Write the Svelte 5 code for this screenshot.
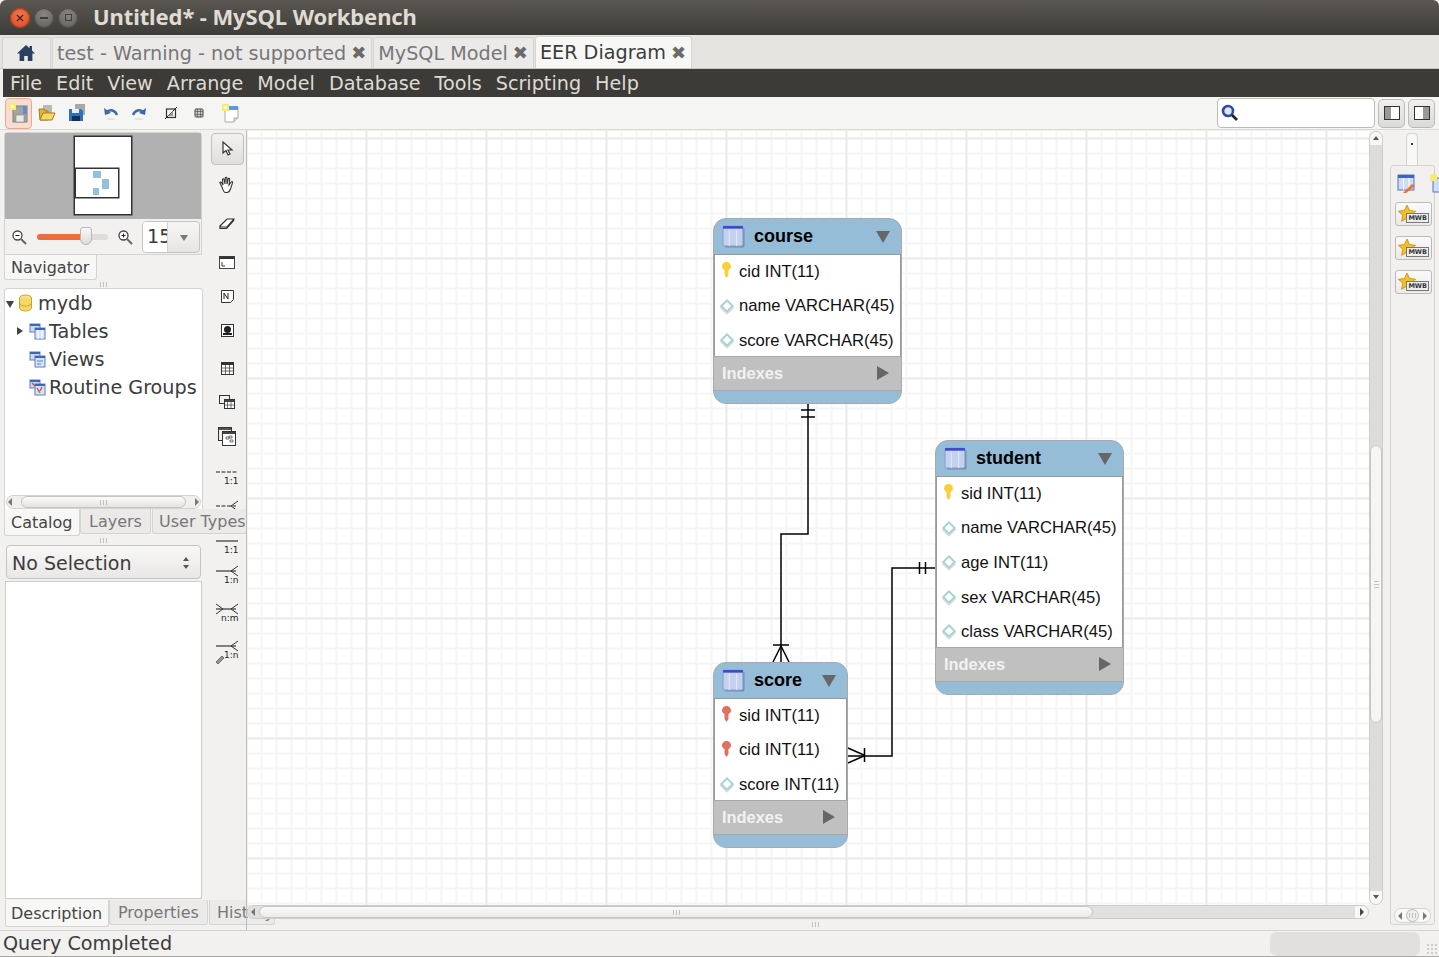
<script>
  const menu = ['File','Edit','View','Arrange','Model','Database','Tools','Scripting','Help'];
  const tables = [
    { name:'course', x:466, y:87, w:189, cols:[['pk','cid INT(11)'],['col','name VARCHAR(45)'],['col','score VARCHAR(45)']] },
    { name:'student', x:688, y:309, w:189, cols:[['pk','sid INT(11)'],['col','name VARCHAR(45)'],['col','age INT(11)'],['col','sex VARCHAR(45)'],['col','class VARCHAR(45)']] },
    { name:'score', x:466, y:531, w:135, cols:[['fk','sid INT(11)'],['fk','cid INT(11)'],['col','score INT(11)']] }
  ];
  const tools = [
    {k:'arrow',h:36},{k:'hand',h:36},{k:'eraser',h:42},{k:'layer',h:34},{k:'note',h:34},{k:'image',h:34},
    {k:'table',h:42},{k:'view',h:26},{k:'routine',h:42},
    {k:'rel',h:42,t:'1:1',dash:true,crow:false},{k:'rel',h:26,t:'1:n',dash:true,crow:true},
    {k:'rel',h:44,t:'1:1',dash:false,crow:false},{k:'rel',h:16,t:'1:n',dash:false,crow:true},
    {k:'rel',h:60,t:'n:m',dash:false,crow:true,both:true},{k:'rel',h:14,t:'1:n',dash:false,crow:true,pen:true}
  ];
</script>

{#snippet grip()}<span class="grip"></span>{/snippet}

{#snippet tableIcon(s)}
  <svg width={s} height={s} viewBox="0 0 22 22">
    <rect x="2.500" y="2.500" width="19" height="19" rx="1.500" fill="#4a5f8a" opacity=".5"/>
    <rect x="1" y="1" width="19" height="19" rx="1.500" fill="#c3d1ee" stroke="#8ba0d0"/>
    <rect x="1" y="1" width="19" height="2.500" fill="#3a48cc"/>
    <path d="M7 4v16M14 4v16" stroke="#dde5f6" stroke-width="1.200"/>
  </svg>
{/snippet}

{#snippet stack(c)}
  <svg width="17" height="17" viewBox="0 0 17 17">
    <rect x="1" y="1" width="10" height="8" fill="#c9d9f2" stroke="#5f7fb8"/>
    <rect x="1" y="1" width="10" height="2" fill="#3f63b5"/>
    <rect x="6" y="5" width="10" height="11" fill="#d7e4f6" stroke="#5f7fb8"/>
    <rect x="6" y="5" width="10" height="2" fill="#3f63b5"/>
    {#if c === 't'}<path d="M9 7v9M13 7v9" stroke="#fff"/>{/if}
    {#if c === 'v'}<path d="M8 10h6M8 13h4" stroke="#5f7fb8"/>{/if}
    {#if c === 'r'}<path d="M3 4l3 3M8 9l3 5M13 8l-2 4" stroke="#c05a50" stroke-width="1.400"/>{/if}
  </svg>
{/snippet}

{#snippet star()}
  <button class="starbtn">
    <svg width="36" height="22" viewBox="0 0 36 22">
      <path d="M11 2l2.600 5.600 6 .7-4.500 4 1.300 6L11 15.200 5.600 18.300l1.300-6-4.500-4 6-.7z" fill="#f5c024" stroke="#c08a10" stroke-width=".8"/>
    </svg>
    <span class="mwb">MWB</span>
  </button>
{/snippet}

<div class="app">
  <header class="title">
    <span class="wb close"><svg width="8" height="8" viewBox="0 0 8 8"><path d="M1 1l6 6M7 1L1 7" stroke="#4d2016" stroke-width="1.300"/></svg></span>
    <span class="wb"><i class="dash"></i></span>
    <span class="wb"><i class="sq"></i></span>
    <span class="title-text">Untitled* - MySQL Workbench</span>
  </header>

  <nav class="tabs">
    <div class="tab home">
      <svg width="20" height="18" viewBox="0 0 20 18"><path d="M10 1L1 9.500h2.600V17h4.600v-5h3.600v5h4.600V9.500H19l-3-2.900V2h-2.400v2.300z" fill="#2b3f5e"/></svg>
    </div>
    <div class="tab">test - Warning - not supported <b class="x">✖</b></div>
    <div class="tab">MySQL Model <b class="x">✖</b></div>
    <div class="tab active">EER Diagram <b class="x">✖</b></div>
  </nav>

  <div class="menu">
    {#each menu as m}<span>{m}</span>{/each}
  </div>

  <div class="toolbar">
    <span class="tb selected">
      <svg width="22" height="22" viewBox="0 0 22 22"><rect x="5" y="4" width="14" height="16" fill="#a3a3a0" stroke="#808080"/><rect x="8" y="13" width="8" height="7" fill="#eaeae8" stroke="#888" stroke-width=".6"/><rect x="15" y="4" width="4" height="8" fill="#5b8fd0"/><rect x="1" y="1" width="7" height="7" fill="#f8ec70"/><rect x="3" y="3" width="3" height="3" fill="#fffbd0"/></svg>
    </span>
    <span class="tb g1">
      <svg width="18" height="18" viewBox="0 0 18 18"><rect x="5" y="1" width="9" height="9" fill="#b8b8b4"/><path d="M1 5h5l1 2h3v9H2z" fill="#e2b53a" stroke="#a67c14"/><path d="M2 16l3-7h12l-3 7z" fill="#f5d76a" stroke="#a67c14"/></svg>
    </span>
    <span class="tb g2">
      <svg width="18" height="18" viewBox="0 0 18 18"><rect x="7" y="0" width="10" height="11" fill="#a8a8a4"/><path d="M1 5h12l2 2v10H1z" fill="#2f6fc0"/><rect x="4" y="5" width="7" height="4" fill="#e8eef7"/><rect x="4" y="12" width="8" height="5" fill="#12305e"/></svg>
    </span>
    <span class="tb g3">
      <svg width="16" height="16" viewBox="0 0 16 16"><path d="M14 10C12 5 7 4 4 7" fill="none" stroke="#3a6aa8" stroke-width="2.400"/><path d="M1 3l1 7 6-2z" fill="#3a6aa8"/><path d="M4 14h8" stroke="#ddd" stroke-width="1.400"/></svg>
    </span>
    <span class="tb g4">
      <svg width="16" height="16" viewBox="0 0 16 16"><path d="M2 10C4 5 9 4 12 7" fill="none" stroke="#3a6aa8" stroke-width="2.400"/><path d="M15 3l-1 7-6-2z" fill="#3a6aa8"/><path d="M4 14h8" stroke="#ddd" stroke-width="1.400"/></svg>
    </span>
    <span class="tb g5">
      <svg width="12" height="12" viewBox="0 0 12 12"><rect x="1.500" y="2" width="9" height="8.500" fill="none" stroke="#333" stroke-width="1.200"/><path d="M0 12L12 0" stroke="#222"/><path d="M3 9l5-5v5z" fill="#999"/></svg>
    </span>
    <span class="tb g6">
      <svg width="10" height="10" viewBox="0 0 10 10"><rect x="1" y="1" width="8" height="8" rx="1" fill="#ccc" stroke="#444"/><path d="M3.500 1v8M6.500 1v8M1 3.500h8M1 6.500h8" stroke="#555" stroke-width=".7"/></svg>
    </span>
    <span class="tb g7">
      <svg width="18" height="19" viewBox="0 0 18 19"><path d="M3 3h13v11l-4 4H3z" fill="#fff" stroke="#aaa"/><rect x="3" y="2" width="13" height="4" fill="#5b9ae0"/><path d="M12 18v-4h4" fill="#ddd" stroke="#aaa"/><rect x="0" y="0" width="7" height="7" fill="#f8ec70"/><rect x="2" y="2" width="3" height="3" fill="#fffbd0"/></svg>
    </span>
    <span class="spacer"></span>
    <div class="search">
      <svg width="18" height="18" viewBox="0 0 18 18"><circle cx="7" cy="7" r="5" fill="#dfe6f5" stroke="#2d4da0" stroke-width="2.600"/><path d="M11 11l5 5" stroke="#222" stroke-width="2.600"/></svg>
    </div>
    <span class="side-btn"><svg width="16" height="14" viewBox="0 0 16 14"><rect x=".5" y=".5" width="15" height="13" fill="#fff" stroke="#333"/><rect x="1" y="1" width="6" height="12" fill="#999"/></svg></span>
    <span class="side-btn"><svg width="16" height="14" viewBox="0 0 16 14"><rect x=".5" y=".5" width="15" height="13" fill="#fff" stroke="#333"/><rect x="9" y="1" width="6" height="12" fill="#999"/></svg></span>
  </div>

  <main class="main">
    <aside class="sidebar">
      <section class="navbox">
        <div class="preview">
          <div class="page">
            <div class="viewport">
              <i class="mini m1"></i><i class="mini m2"></i><i class="mini m3"></i>
            </div>
          </div>
        </div>
        <div class="zoomrow">
          <svg class="zicon" width="16" height="16" viewBox="0 0 16 16"><circle cx="6.500" cy="6.500" r="4.500" fill="#fff" stroke="#444" stroke-width="1.300"/><path d="M4.500 6.500h4" stroke="#222"/><path d="M10 10l5 5" stroke="#666" stroke-width="2"/></svg>
          <div class="slider"><div class="fill"></div><div class="thumb"></div></div>
          <svg class="zicon" width="16" height="16" viewBox="0 0 16 16"><circle cx="6.500" cy="6.500" r="4.500" fill="#fff" stroke="#444" stroke-width="1.300"/><path d="M4.500 6.500h4M6.500 4.500v4" stroke="#222"/><path d="M10 10l5 5" stroke="#666" stroke-width="2"/></svg>
          <div class="zcombo"><span class="zval"><span>15</span></span><span class="zarrow"></span></div>
        </div>
      </section>
      <div class="subtabs navtabs"><span class="st on nav">Navigator</span></div>
      <div class="handle h1">{@render grip()}</div>

      <section class="tree">
        <div class="tn l0"><i class="tri down"></i>
          <svg width="15" height="18" viewBox="0 0 15 18"><ellipse cx="7.500" cy="4" rx="6" ry="3" fill="#f7e38a" stroke="#c9a227"/><path d="M1.500 4v10c0 1.600 2.700 3 6 3s6-1.400 6-3V4" fill="#f3d768" stroke="#c9a227"/><path d="M1.500 9c0 1.600 2.700 3 6 3s6-1.400 6-3" fill="none" stroke="#c9a227"/></svg>
          <span>mydb</span></div>
        <div class="tn l1"><i class="tri fwd"></i>{@render stack('t')}<span>Tables</span></div>
        <div class="tn l1"><i class="tri none"></i>{@render stack('v')}<span>Views</span></div>
        <div class="tn l1"><i class="tri none"></i>{@render stack('r')}<span>Routine Groups</span></div>
        <div class="tree-sb">
          <i class="ar l"></i>
          <div class="tree-thumb">{@render grip()}</div>
          <i class="ar r"></i>
        </div>
      </section>

      <div class="subtabs lower">
        <span class="st on catalog">Catalog</span><span class="st layers">Layers</span><span class="st types">User Types</span>
      </div>
      <div class="handle h2">{@render grip()}</div>

      <div class="combo"><span>No Selection</span>
        <svg width="8" height="14" viewBox="0 0 8 14"><path d="M4 1l3 4H1zM4 13l3-4H1z" fill="#555"/></svg>
      </div>
      <div class="desc"></div>
      <div class="subtabs bottom">
        <span class="st on dsc">Description</span><span class="st props">Properties</span><span class="st hist">History</span>
      </div>
    </aside>

    <div class="toolcol">
      {#each tools as t}
        <div class="toolslot" style="height:{t.h}px">
          {#if t.k === 'arrow'}
            <span class="toolbtn"><svg width="14" height="16" viewBox="0 0 14 16"><path d="M3 1v11l3-2.500L8 14l2-1-2-4h4z" fill="#fff" stroke="#333" stroke-width="1.200"/></svg></span>
          {:else if t.k === 'hand'}
            <svg width="18" height="18" viewBox="0 0 18 18"><path d="M4 11L2 7c-.5-1 1-1.500 1.500-.5L5 9 4.500 3.500c0-1 1.500-1 1.600 0L7 8l.3-6c0-1 1.600-1 1.600 0L9 8l1.200-5c.2-1 1.600-.8 1.500.2L11 9l2.300-3c.6-.8 1.700 0 1.200.9L12.500 13c-.8 2-1.500 3.500-3.500 3.500H7.500C5.500 16.500 5 14 4 11z" fill="#fff" stroke="#333" stroke-width="1.100"/></svg>
          {:else if t.k === 'eraser'}
            <svg width="16" height="12" viewBox="0 0 16 12"><path d="M1 8l7-7h7l-7 8H2z" fill="#fff" stroke="#333" stroke-width="1.200"/><path d="M1 8v2.500h6.500L15 2" fill="none" stroke="#333" stroke-width="1.200"/></svg>
          {:else if t.k === 'layer'}
            <svg width="16" height="13" viewBox="0 0 16 13"><rect x=".5" y=".5" width="15" height="12" fill="#fff" stroke="#444"/><rect x=".5" y=".5" width="15" height="2.500" fill="#333"/><path d="M3 6v4h3" stroke="#333" fill="none"/></svg>
          {:else if t.k === 'note'}
            <svg width="13" height="13" viewBox="0 0 13 13"><path d="M.5.500h12v9l-3 3h-9z" fill="#fff" stroke="#333"/><path d="M3 9V3l4 6V3" stroke="#222" fill="none"/></svg>
          {:else if t.k === 'image'}
            <svg width="13" height="13" viewBox="0 0 13 13"><rect x=".5" y=".5" width="12" height="12" fill="#fff" stroke="#333"/><circle cx="6.500" cy="5.500" r="3.500" fill="#222"/><rect x="2" y="9" width="9" height="2" fill="#222"/></svg>
          {:else if t.k === 'table'}
            <svg width="13" height="13" viewBox="0 0 13 13"><rect x=".5" y=".5" width="12" height="12" fill="#fff" stroke="#333"/><rect x="1" y="1" width="11" height="2" fill="#333"/><path d="M4.500 3v9M8.500 3v9M1 6h11M1 9h11" stroke="#444" stroke-width=".8"/></svg>
          {:else if t.k === 'view'}
            <svg width="16" height="14" viewBox="0 0 16 14"><rect x=".5" y=".5" width="10" height="8" fill="#eee" stroke="#333"/><rect x="5.500" y="4.500" width="10" height="9" fill="#fff" stroke="#333"/><rect x="6" y="5" width="9" height="2" fill="#444"/><path d="M8.500 7v6M12 7v6M6 10h9" stroke="#555" stroke-width=".8"/></svg>
          {:else if t.k === 'routine'}
            <svg width="18" height="19" viewBox="0 0 18 19"><rect x=".5" y=".5" width="13" height="13" fill="#eee" stroke="#333"/><rect x="1" y="1" width="12" height="2" fill="#555"/><rect x="4.500" y="4.500" width="13" height="14" fill="#fff" stroke="#333"/><rect x="5" y="5" width="12" height="2" fill="#444"/><path d="M8 10h3v2H8zM12 13h3v2h-3zM11 9h3v2h-3z" fill="none" stroke="#444" stroke-width=".7"/></svg>
          {:else}
            <svg class="rel" width="32" height="24" viewBox="0 0 32 24">
              <path d={t.crow ? 'M5 6h20' : 'M5 6h22'} stroke="#222" stroke-width="1.100" stroke-dasharray={t.dash ? '4 1.500' : undefined}/>
              {#if t.crow}<path d="M27 1l-7 5 7 5" fill="none" stroke="#333"/>{/if}
              {#if t.both}<path d="M5 1l7 5-7 5" fill="none" stroke="#333"/>{/if}
              {#if t.pen}<path d="M5 22l6-6 2 2-6 6z" fill="#999" stroke="#444" stroke-width=".7"/>{/if}
              <text x="27.500" y="18" text-anchor="end">{t.t}</text>
            </svg>
          {/if}
        </div>
      {/each}
    </div>

    <div class="center">
      <div class="canvas-row">
        <div class="canvas">
          <svg class="wires" width="1122" height="774" viewBox="247 131 1122 774">
            <g fill="none" stroke="#000" stroke-width="1.500">
              <path d="M808 404V534H781V662"/>
              <path d="M801 410h14M801 417h14"/>
              <path d="M773 645h16M781 646l-8 16M781 646l8 16"/>
              <path d="M935 568H892V756H848"/>
              <path d="M919.500 562v12M925.500 562v12"/>
              <path d="M864.500 748v14M865 755.500l-17-7.500M865 755.500l-17 7.500"/>
            </g>
          </svg>
          {#each tables as t}
            <div class="tbl" style="left:{t.x}px;top:{t.y}px;width:{t.w}px">
              <div class="thead">
                {@render tableIcon(23)}
                <span class="tname">{t.name}</span>
                <i class="tdown"></i>
              </div>
              <div class="tbody">
                {#each t.cols as c}
                  <div class="trow">
                    {#if c[0] === 'col'}
                      <i class="dia"></i>
                    {:else}
                      <svg class="key" width="11" height="18" viewBox="0 0 11 18"><path d="M5.500 1a4.500 4.500 0 0 1 4.500 4.500c0 2-1.500 3-2.500 3.500v5l-2 3-2-3V9C2.500 8.500 1 7.500 1 5.500A4.500 4.500 0 0 1 5.500 1z" fill={c[0] === 'pk' ? '#f6cf3a' : '#e0705f'}/></svg>
                    {/if}
                    <span>{c[1]}</span>
                  </div>
                {/each}
              </div>
              <div class="tidx"><span>Indexes</span><i class="tfwd"></i></div>
              <div class="tfoot"></div>
            </div>
          {/each}
        </div>
        <div class="vsb">
          <i class="vend top"></i>
          <div class="vthumb"><span class="grip"></span></div>
          <i class="vend bot"></i>
        </div>
      </div>
      <div class="hsb">
        <i class="ar l"></i>
        <div class="hthumb">{@render grip()}</div>
        <div class="hend"><i class="ar r"></i></div>
      </div>
      <div class="handle h3">{@render grip()}</div>
    </div>

    <aside class="rside">
      <div class="rtab"><i></i></div>
      <div class="rpanel">
        <div class="ricons">
          <svg width="20" height="20" viewBox="0 0 20 20"><rect x="1" y="1" width="16" height="15" fill="#cfdcf3" stroke="#5577bb"/><rect x="1" y="1" width="16" height="3" fill="#3f63c5"/><path d="M6.500 4v12M12 4v12" stroke="#fff"/><path d="M6 19l9-9 3 2-9 7z" fill="#e8732a"/></svg>
          <svg class="clip" width="10" height="20" viewBox="0 0 10 20"><rect x="3" y="4" width="14" height="14" fill="#cfdcf3" stroke="#5577bb"/><rect x="0" y="0" width="7" height="7" fill="#f8ec70"/></svg>
        </div>
        {@render star()}
        {@render star()}
        {@render star()}
        <div class="rspace"></div>
        <div class="rsb"><i class="ar l"></i><span class="rthumb">{@render grip()}</span><i class="ar r"></i></div>
      </div>
    </aside>
  </main>

  <footer class="status">
    <span>Query Completed</span>
    <div class="progress"></div>
    <i class="corner"></i>
  </footer>
</div>

<style>
  :global(body) { margin: 0; background: #f2f1f0; }
  .app {
    width: 1439px; height: 957px; overflow: hidden; display: flex; flex-direction: column;
    font-family: "DejaVu Sans", sans-serif; color: #3c3c3c; background: #f2f1f0;
  }
  i { display: block; }

  .title {
    height: 35px; flex: none; display: flex; align-items: center; gap: 4px; padding-left: 10px; box-sizing: border-box;
    background: linear-gradient(#5a5751, #3d3c38); border-radius: 6px 6px 0 0;
  }
  .wb {
    width: 20px; height: 20px; border-radius: 50%; display: flex; align-items: center; justify-content: center;
    background: radial-gradient(circle at 50% 35%, #8a877f, #5c5a54); box-shadow: inset 0 0 0 1px #4a4842;
  }
  .wb.close { background: radial-gradient(circle at 50% 35%, #f07a4e, #d8421e); box-shadow: inset 0 0 0 1px #a93a1c; }
  .dash { width: 8px; height: 2px; background: #3f3d38; }
  .sq { width: 7px; height: 7px; border: 1.500px solid #3f3d38; box-sizing: border-box; }
  .title-text { margin: 0 0 3px 11px; font: 700 22px "Noto Sans", sans-serif; color: #e0dcd3; letter-spacing: -.1px; }

  .tabs {
    height: 34px; flex: none; box-sizing: border-box; display: flex; align-items: flex-end; gap: 1px; padding: 2px 0 0 2px;
    background: #e6e4e1; border-bottom: 1px solid #c9c7c4;
  }
  .tab {
    height: 31px; box-sizing: border-box; padding: 0 5px 0 4px; display: flex; align-items: center; gap: 5px; white-space: nowrap;
    font-size: 19.200px; color: #77777a; background: #ebeae8; border: 1px solid #d6d4d1; border-bottom: 0; border-radius: 3px 3px 0 0;
  }
  .tab.home { width: 49px; justify-content: center; }
  .tab.active { background: #f7f7f6; color: #3c3c3c; height: 32px; }
  .x { font-size: 18px; line-height: 1; color: #6a6a6a; font-weight: 400; }

  .menu {
    height: 28px; flex: none; margin-left: 3px; display: flex; align-items: center; gap: 14px; padding-left: 7px;
    background: #3c3b37; color: #dfdbd2; font-size: 19.200px; box-sizing: border-box;
  }

  .toolbar {
    height: 33px; flex: none; display: flex; align-items: center; position: relative; box-sizing: border-box;
    background: #f5f5f4; border-bottom: 1px solid #dcdad7; padding-left: 5px;
  }
  .tb { display: flex; align-items: center; justify-content: center; }
  .tb.selected { width: 27px; height: 31px; box-sizing: border-box; background: #f8dccf; border: 1px solid #f0a88a; border-radius: 4px; }
  .g1 { margin-left: 6px; }
  .g2 { margin-left: 12px; }
  .g3 { margin-left: 17px; }
  .g4 { margin-left: 12px; }
  .g5 { margin-left: 18px; }
  .g6 { margin-left: 17px; }
  .g7 { margin-left: 18px; }
  .spacer { flex: 1; }
  .search {
    width: 158px; height: 30px; box-sizing: border-box; background: #fff; border: 1px solid #bdbbb8; border-radius: 4px;
    display: flex; align-items: center; padding-left: 3px; margin-right: 3px;
  }
  .side-btn {
    width: 27px; height: 29px; box-sizing: border-box; display: flex; align-items: center; justify-content: center;
    background: linear-gradient(#f1f0ef, #dcdbd9); border: 1px solid #bdbbb8; border-radius: 5px; margin-right: 3px;
  }
  .side-btn:last-child { margin-right: 4px; }

  .main { height: 800px; flex: none; display: flex; position: relative; }

  .sidebar { width: 205px; flex: none; position: relative; z-index: 2; padding-left: 4px; box-sizing: border-box; }
  .navbox {
    width: 198px; height: 123px; margin-top: 2px; box-sizing: border-box; border: 1px solid #d5d3d0; border-radius: 4px 4px 0 0;
  }
  .preview { height: 86px; background: #b1b1b1; display: flex; justify-content: center; box-sizing: border-box; align-items: flex-start; padding-top: 3px; position: relative; }
  .page { width: 58px; height: 79px; box-sizing: border-box; background: #fff; border: 1px solid #333; box-shadow: 0 0 0 .5px #333; }
  .viewport { width: 44px; height: 30px; border: 1px solid #333; box-shadow: 0 0 0 .5px #333; position: relative; box-sizing: border-box; margin-top: 31px; }
  .mini { position: absolute; background: #96bfdc; }
  .m1 { left: 17px; top: 2px; width: 8px; height: 7px; }
  .m2 { left: 26px; top: 10px; width: 7px; height: 10px; }
  .m3 { left: 17px; top: 19px; width: 6px; height: 7px; }
  .zoomrow { height: 36px; display: flex; align-items: center; padding-left: 6px; }
  .slider { width: 71px; height: 6px; margin: 0 9px 0 10px; background: #dedddb; border-radius: 3px; position: relative; }
  .fill { width: 48px; height: 6px; background: #ee6c3d; border-radius: 3px; }
  .thumb { position: absolute; left: 43px; top: -7px; width: 12px; height: 18px; background: linear-gradient(#f8f8f7, #dddcda); border: 1px solid #b8b6b3; border-radius: 3px 3px 6px 6px; box-sizing: border-box; }
  .zicon { flex: none; }
  .zcombo { width: 58px; height: 32px; margin-left: 9px; box-sizing: border-box; display: flex; background: linear-gradient(#f6f6f5, #e6e5e3); border: 1px solid #c6c4c1; border-radius: 4px; }
  .zval { width: 25px; background: #fff; overflow: hidden; font-size: 19.200px; line-height: 30px; padding-left: 4px; box-sizing: border-box; border-right: 1px solid #d5d3d0; border-radius: 3px 0 0 3px; white-space: nowrap; }
  .zarrow { width: 0; height: 0; border: 4px solid transparent; border-top: 6px solid #777; border-bottom: 0; margin: 13px 0 0 12px; }

  .subtabs { display: flex; position: relative; white-space: nowrap; }
  .navtabs { height: 25px; }
  .st {
    font-size: 16px; box-sizing: border-box; display: flex; align-items: center; color: #77777a; background: #ebeae8;
    border: 1px solid #d6d4d1; border-top: 0; border-radius: 0 0 3px 3px; flex: none;
  }
  .st.on { color: #444; background: #f7f7f6; }
  .nav { width: 93px; height: 25px; padding-left: 6px; color: #555; }
  .handle { display: flex; justify-content: center; align-items: center; }
  .h1 { height: 8px; width: 198px; }
  .h2 { height: 10px; width: 198px; }
  .h3 { height: 11px; }
  .grip { display: block; width: 7px; height: 5px; background: repeating-linear-gradient(90deg, #c2c0bd 0 1px, transparent 1px 3px); }

  .tree { width: 199px; height: 221px; box-sizing: border-box; background: #fff; border: 1px solid #d5d3d0; border-bottom: 0; border-radius: 4px 4px 0 0; position: relative; }
  .tn { height: 28px; display: flex; align-items: center; font-size: 19.200px; color: #3c3c3c; white-space: nowrap; }
  .tn svg { margin-right: 3px; flex: none; }
  .tn.l0 { padding-left: 1px; }
  .tn.l0 svg { margin: 0 5px 0 4px; }
  .tn.l1 { padding-left: 12px; }
  .tri { width: 0; height: 0; flex: none; border: 4px solid transparent; }
  .tri.down { border-top: 7px solid #444; border-bottom: 0; margin-top: 2px; }
  .tri.fwd { border-left: 6px solid #444; border-right: 0; margin-right: 6px; }
  .tri.none { border: 0; width: 12px; height: 1px; }
  .tree-sb {
    position: absolute; left: 1px; right: 1px; top: 206px; height: 14px; display: flex; align-items: center;
    background: #f0efee; border: 1px solid #d5d3d0; border-radius: 7px; box-sizing: border-box;
  }
  .tree-thumb { flex: 1; height: 12px; margin: 0 8px; background: linear-gradient(#fbfbfb, #e4e3e1); border: 1px solid #c6c4c1; border-radius: 6px; box-sizing: border-box; display: flex; align-items: center; justify-content: center; }
  .ar { width: 0; height: 0; flex: none; border: 4px solid transparent; margin: 0 1px; }
  .ar.l { border-right: 4px solid #777; border-left: 0; }
  .ar.r { border-left: 4px solid #777; border-right: 0; }

  .lower { height: 26px; }
  .catalog { width: 76px; height: 27px; padding-left: 6px; }
  .layers { width: 71px; height: 25px; padding-left: 8px; }
  .types { width: 95px; height: 25px; padding-left: 6px; margin-left: 1px; }
  .combo {
    width: 195px; height: 34px; margin-left: 2px; box-sizing: border-box; display: flex; align-items: center; justify-content: space-between;
    padding: 2px 10px 0 5px; font-size: 19px; color: #3c3c3c; background: linear-gradient(#f8f8f7, #e9e8e6); border: 1px solid #c6c4c1; border-radius: 4px;
  }
  .desc { width: 197px; height: 318px; margin: 2px 0 0 1px; box-sizing: border-box; background: #fff; border: 1px solid #cfcdca; }
  .bottom { height: 27px; margin: 1px 0 0 1px; }
  .dsc { width: 104px; height: 27px; padding-left: 5px; }
  .props { width: 99px; height: 25px; padding-left: 8px; }
  .hist { width: 66px; height: 25px; padding-left: 7px; margin-left: 1px; background: #ebeae8; overflow: hidden; }

  .toolcol { width: 41px; flex: none; display: flex; flex-direction: column; padding-top: 1px; box-sizing: border-box; }
  .toolslot { display: flex; align-items: center; justify-content: center; padding-left: 3px; box-sizing: border-box; }
  .toolbtn { width: 33px; height: 32px; box-sizing: border-box; display: flex; align-items: center; justify-content: center; background: linear-gradient(#f3f2f1, #dfdedc); border: 1px solid #c2c0bd; border-radius: 4px; }
  .rel { flex: none; }
  .rel text { font-family: "DejaVu Sans", sans-serif; font-size: 9px; fill: #222; }

  .center { width: 1137px; margin-right: 7px; flex: none; display: flex; flex-direction: column; position: relative; z-index: 3; box-sizing: border-box; border-left: 1px solid #bdbbb8; padding-top: 1px; }
  .canvas-row { height: 774px; flex: none; display: flex; }
  .canvas {
    width: 1122px; height: 774px; flex: none; position: relative; overflow: hidden; background-color: #fff;
    background-image:
      linear-gradient(90deg, #ebebeb 2px, transparent 2px),
      linear-gradient(#ebebeb 2px, transparent 2px),
      linear-gradient(90deg, #f5f5f5 2px, transparent 2px),
      linear-gradient(#f5f5f5 2px, transparent 2px);
    background-size: 120px 120px, 120px 120px, 15px 15px, 15px 15px;
    background-position: 118.500px 6.500px, 118.500px 6.500px, 13.500px 6.500px, 13.500px 6.500px;
  }
  .wires { position: absolute; left: 0; top: 0; }

  .tbl {
    position: absolute; box-sizing: border-box; display: flex; flex-direction: column; overflow: hidden;
    border: 1px solid #a9a9a9; border-radius: 13px; background: #95bdd8; font-family: "Liberation Sans", sans-serif;
  }
  .thead { height: 35px; flex: none; display: flex; align-items: center; padding: 0 11px 0 8px; box-sizing: border-box; }
  .tname { font-size: 18px; font-weight: 700; color: #000; margin-left: 9px; flex: 1; }
  .tdown { width: 0; height: 0; border: 7px solid transparent; border-top: 12px solid #666; border-bottom: 0; }
  .tbody { background: #fff; border: 1px solid #999; border-width: 1px 1px 0; margin-bottom: -3px; }
  .trow { height: 34.600px; display: flex; align-items: center; font-size: 16.600px; color: #111; white-space: nowrap; position: relative; padding: 0 0 1px 24px; box-sizing: border-box; }
  .dia { position: absolute; left: 7px; top: 11px; width: 10px; height: 10px; box-sizing: border-box; background: #fff; border: 2px solid #a9d2d4; transform: rotate(45deg); box-shadow: 1px 1px 1px #ccc; }
  .key { position: absolute; left: 6px; top: 6px; }
  .tidx { height: 35px; flex: none; position: relative; background: #c0c0c0; border-top: 1px solid #a8a8a8; border-bottom: 1px solid #a8a8a8; box-sizing: border-box; display: flex; align-items: center; justify-content: space-between; padding: 0 12px 0 8px; font-size: 16.400px; font-weight: 700; color: #f2f2f2; }
  .tfwd { width: 0; height: 0; border: 7px solid transparent; border-left: 12px solid #666; border-right: 0; }
  .tfoot { height: 12px; flex: none; background: #95bdd8; }

  .vsb { width: 14px; height: 774px; box-sizing: border-box; position: relative; background: #dddcda; border-radius: 7px; border: 1px solid #cfcdca; }
  .vend { position: absolute; left: 0; right: 0; height: 13px; background: #f7f7f6; }
  .vend::after { content: ""; display: block; width: 0; height: 0; margin: 4px auto 0; border: 3.500px solid transparent; }
  .vend.top { top: 0; border-radius: 6px 6px 0 0; }
  .vend.top::after { border-bottom: 4px solid #555; border-top: 0; }
  .vend.bot { bottom: 0; border-radius: 0 0 6px 6px; }
  .vend.bot::after { border-top: 4px solid #555; border-bottom: 0; }
  .vthumb { position: absolute; left: 0; right: 0; top: 313px; height: 278px; background: #f5f5f4; border: 1px solid #c8c6c3; border-radius: 6px; box-sizing: border-box; display: flex; align-items: center; justify-content: center; }
  .vthumb .grip { transform: rotate(90deg); }

  .hsb { width: 1122px; height: 14px; flex: none; box-sizing: border-box; display: flex; align-items: center; background: #e1e0de; border: 1px solid #cfcdca; border-radius: 7px; position: relative; }
  .hsb > .ar.l { margin-left: 3px; }
  .hthumb { width: 834px; height: 12px; margin-left: 3px; background: linear-gradient(#fafafa, #ecebe9); border: 1px solid #c8c6c3; border-radius: 6px; box-sizing: border-box; display: flex; align-items: center; justify-content: center; }
  .hend { position: absolute; right: 0; top: 0; bottom: 0; width: 13px; background: #f7f7f6; border-radius: 0 6px 6px 0; display: flex; align-items: center; justify-content: center; }
  .hend .ar.r { border-left-color: #444; }

  .rside { width: 49px; flex: none; display: flex; flex-direction: column; }
  .rtab { width: 12px; height: 32px; margin: 3px 0 0 16px; box-sizing: border-box; background: #f8f8f7; border: 1px solid #d5d3d0; border-bottom: 0; border-radius: 4px 4px 0 0; position: relative; }
  .rtab i { width: 2px; height: 2px; background: #333; margin: 9px auto 0; }
  .rpanel { width: 45px; height: 760px; box-sizing: border-box; background: #f1f0ef; border: 1px solid #d5d3d0; border-radius: 3px; display: flex; flex-direction: column; padding: 0 2px 0 4px; }
  .ricons { height: 36px; display: flex; align-items: center; gap: 13px; padding-left: 2px; flex: none; }
  .ricons svg { flex: none; }
  .starbtn { width: 37px; height: 24px; flex: none; padding: 0; margin: 0 0 10px; box-sizing: border-box; position: relative; background: linear-gradient(#fafafa, #ebeae8); border: 1px solid #bdbbb8; border-radius: 3px; display: block; }
  .starbtn svg { position: absolute; left: 0; top: 0; }
  .mwb { position: absolute; right: 2px; bottom: 2px; font: 700 6.500px/8px "DejaVu Sans", sans-serif; color: #333; border: 1px solid #777; padding: 0 1px; background: #eee; }
  .rspace { flex: 1; }
  .rsb { height: 15px; flex: none; margin: 0 1px 1px -1px; box-sizing: border-box; display: flex; align-items: center; justify-content: space-between; background: #f8f8f7; border: 1px solid #d5d3d0; border-radius: 7px; padding: 0 2px; }
  .rthumb { width: 13px; height: 13px; box-sizing: border-box; border: 1px solid #bdbbb8; border-radius: 50%; background: #eee; display: flex; align-items: center; justify-content: center; }

  .status { height: 27px; flex: none; box-sizing: border-box; position: relative; display: flex; align-items: center; justify-content: space-between; padding: 0 19px 0 3px; font-size: 19.200px; color: #3c3c3c; border-top: 1px solid #d5d3d0; border-bottom: 1px solid #a9a7a4; background: #f2f1f0; }
  .progress { width: 150px; height: 24px; background: #e1e0de; border-radius: 7px; }
  .corner { position: absolute; right: 1px; bottom: 1px; width: 12px; height: 12px; background: radial-gradient(circle, #cfcdca 1px, transparent 1px) 0 0 / 4px 4px; }
</style>
